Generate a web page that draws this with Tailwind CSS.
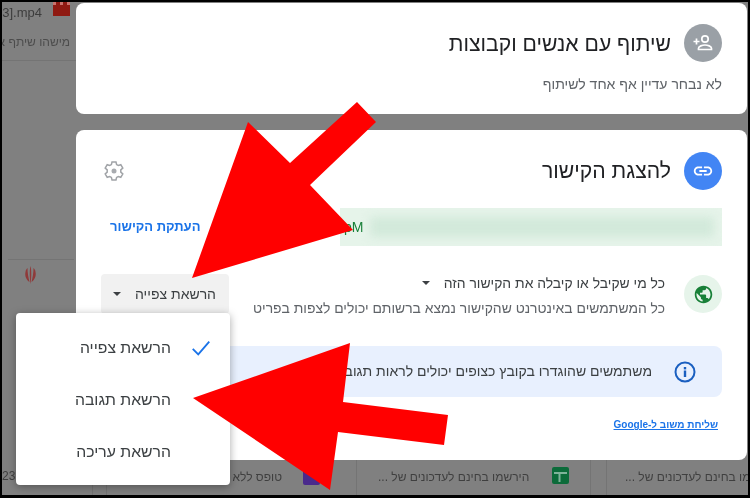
<!DOCTYPE html>
<html lang="he" dir="rtl">
<head>
<meta charset="utf-8">
<script src="https://cdn.jsdelivr.net/npm/@tailwindcss/browser@4"></script>
</head>
<body class="m-0 bg-black">
<div class="relative w-[750px] h-[498px] overflow-hidden bg-black font-['Liberation_Sans',sans-serif] p-[2px_2px_3px_2px]">
  <div class="relative w-full h-full bg-[#808080] overflow-hidden blur-[0.4px]">
    <!-- files behind the dialog -->
    <div class="absolute left-0 top-0 w-[74px] h-[59px] border-b border-[#747474] overflow-hidden" dir="ltr">
      <div class="flex items-start">
        <span class="text-[13px] text-[#3c3c3c] mt-[1px] ml-[0px] whitespace-nowrap w-[40px] text-right">3].mp4</span>
        <span class="ml-[11px] w-[17px] h-[14px] bg-[#8f1a12] border-t-[3px] border-dotted border-[#c9726c]"></span>
      </div>
      <div class="text-[12px] text-[#4c4c4c] mt-[10px] whitespace-nowrap w-[68px] overflow-hidden" dir="rtl">מישהו שיתף איתך</div>
    </div>
    <div class="absolute left-[6px] top-[257px] w-[66px] border-t border-[#747474] h-[40px]" dir="ltr">
      <svg class="ml-[16px] mt-[6px]" width="13" height="18" viewBox="0 0 12 18" fill="#8f3a3a"><path d="M6 0c1 3 1 12 0 18C5 12 5 3 6 0zM3 2c0 5 1 10 2 14C2 14 0 10 1 6c0-2 1-3 2-4zM9 2c1 1 2 2 2 4 1 4-1 8-4 10 1-4 2-9 2-14z"/></svg>
    </div>
    <span class="absolute left-0 top-[465px] w-[13px] overflow-hidden text-[12px] text-[#3f3f3f]" dir="ltr">23</span>
    <span class="absolute left-[90px] top-[483px] w-px h-[12px] bg-[#747474]"></span>
    <span class="absolute left-[104px] top-[483px] w-px h-[12px] bg-[#747474]"></span>
    <span class="absolute left-[230px] top-[466px] w-[50px] text-[12px] text-[#3f3f3f] whitespace-nowrap">טופס ללא שם</span>
    <span class="absolute left-[301px] top-[466px] w-[17px] h-[17px] bg-[#4a2a8c] rounded-[2px]"></span>
    <span class="absolute left-[354px] top-[458px] w-px h-[36px] bg-[#747474]"></span>
    <span class="absolute left-[376px] top-[466px] text-[12px] text-[#3f3f3f] whitespace-nowrap">הירשמו בחינם לעדכונים של ...</span>
    <span class="absolute left-[550px] top-[465px] w-[17px] h-[17px] bg-[#0c6b3a] rounded-[2px] flex items-center justify-center">
      <svg width="13" height="13" viewBox="0 0 13 13"><path d="M0 4h13M5.500 4v9" stroke="#7fb39a" stroke-width="2"/></svg>
    </span>
    <span class="absolute left-[588px] top-[458px] w-px h-[36px] bg-[#747474]"></span>
    <span class="absolute left-[604px] top-[458px] w-px h-[36px] bg-[#747474]"></span>
    <span class="absolute left-[623px] top-[466px] text-[12px] text-[#3f3f3f] whitespace-nowrap">הירשמו בחינם לעדכונים של ...</span>

    <!-- dialog -->
    <div class="absolute left-[74px] top-[1px] w-[671px] flex flex-col gap-[16px]">
      <section class="h-[111px] bg-white rounded-[8px] pr-[25px] pt-[21px]">
        <div class="flex items-center gap-[13px] h-[38px]">
          <span class="w-[38px] h-[38px] rounded-full bg-[#9aa0a6] flex items-center justify-center">
            <svg width="24" height="24" viewBox="0 0 24 24" fill="none" stroke="#fff" stroke-width="1.700"><circle cx="14" cy="8" r="3.200"/><path d="M7.500 18.500v-1.300c0-2 4-3.200 6.500-3.200s6.500 1.200 6.500 3.200v1.300z"/><path d="M2.500 10.500h6M5.500 7.500v6"/></svg>
          </span>
          <h2 class="text-[21.200px] mt-[2px] font-normal text-[#202124] whitespace-nowrap">שיתוף עם אנשים וקבוצות</h2>
        </div>
        <p class="mt-[13px] text-[14px] leading-[18px] text-[#5f6368]">לא נבחר עדיין אף אחד לשיתוף</p>
      </section>

      <section class="relative h-[330px] bg-white rounded-[8px] pr-[25px] pl-[25px] pt-[22px]">
        <div class="flex items-center gap-[13px] h-[38px]">
          <span class="w-[38px] h-[38px] rounded-full bg-[#4285f4] flex items-center justify-center">
            <svg width="22" height="22" viewBox="0 0 24 24" fill="#fff"><path d="M3.900 12c0-1.710 1.390-3.100 3.100-3.100h4V7H7c-2.760 0-5 2.240-5 5s2.240 5 5 5h4v-1.900H7c-1.710 0-3.100-1.390-3.100-3.100zM8 13h8v-2H8v2zm9-6h-4v1.900h4c1.710 0 3.100 1.390 3.100 3.100s-1.390 3.100-3.100 3.100h-4V17h4c2.760 0 5-2.240 5-5s-2.240-5-5-5z"/></svg>
          </span>
          <h2 class="text-[21.200px] font-normal text-[#202124] whitespace-nowrap">להצגת הקישור</h2>
          <svg class="mr-auto ml-[1px]" width="24" height="24" viewBox="0 0 24 24" fill="none" stroke="#a0a3a7" stroke-width="1.500"><path d="M10 3h4l.6 2.600 1.700.9 2.500-.8 2 3.400-2 1.800v2.200l2 1.800-2 3.400-2.500-.8-1.700.9L14 21h-4l-.6-2.600-1.700-.9-2.500.8-2-3.400 2-1.800v-2.200l-2-1.800 2-3.400 2.500.8 1.700-.9z"/><circle cx="12" cy="12" r="2.500" fill="#a8abaf" stroke="none"/></svg>
        </div>

        <div class="mt-[18px] flex items-center justify-between h-[38px]">
          <div class="relative w-[382px] h-full bg-[#e6f4ea] overflow-hidden flex items-center" dir="ltr">
            <span class="text-[14px] text-[#188038] pl-[4px]">pM</span>
            <span class="absolute left-[30px] right-[8px] top-[9px] bottom-[9px] bg-[#d2e9da] blur-[5px]"></span>
          </div>
          <a class="text-[13px] font-bold text-[#1a73e8] whitespace-nowrap ml-[9px]">העתקת הקישור</a>
        </div>

        <div class="mt-[28px] flex items-start h-[44px] gap-[19px]">
          <span class="mt-[1px] w-[38px] h-[38px] rounded-full bg-[#e6f4ea] flex items-center justify-center shrink-0">
            <svg width="21" height="21" viewBox="0 0 24 24" fill="#188038"><path d="M12 2C6.480 2 2 6.480 2 12s4.480 10 10 10 10-4.480 10-10S17.520 2 12 2zm-1 17.930c-3.950-.49-7-3.850-7-7.930 0-.62.080-1.210.210-1.790L9 15v1c0 1.100.9 2 2 2v1.930zm6.900-2.540c-.26-.81-1-1.390-1.900-1.390h-1v-3c0-.55-.45-1-1-1H8v-2h2c.55 0 1-.45 1-1V7h2c1.100 0 2-.9 2-2v-.41c2.930 1.190 5 4.060 5 7.410 0 2.080-.8 3.970-2.100 5.390z"/></svg>
          </span>
          <div class="flex-1 text-[13.900px] leading-[18px] whitespace-nowrap -mt-[1px]">
            <div class="flex items-center gap-[14px] h-[20px] text-[#3c4043]">
              <span>כל מי שקיבל או קיבלה את הקישור הזה</span>
              <span class="w-0 h-0 border-x-[4px] border-x-transparent border-t-[4px] border-t-[#3c4043]"></span>
            </div>
            <div class="mt-[6px] text-[#5f6368]">כל המשתמשים באינטרנט שהקישור נמצא ברשותם יכולים לצפות בפריט</div>
          </div>
          <div class="w-[128px] h-[40px] shrink-0 bg-[#f1f1f1] rounded-[4px] flex items-center gap-[14px] pr-[13px] text-[14px] text-[#3c4043] whitespace-nowrap">
            <span>הרשאת צפייה</span>
            <span class="w-0 h-0 border-x-[4px] border-x-transparent border-t-[4px] border-t-[#3c4043]"></span>
          </div>
        </div>

        <div class="mt-[28px] h-[51px] w-[620px] bg-[#e8f0fe] rounded-[8px] flex items-center gap-[21px] pr-[25px]">
          <svg class="shrink-0" width="24" height="24" viewBox="0 0 24 24" fill="none"><circle cx="12" cy="12" r="9.500" stroke="#1a5fc0" stroke-width="2"/><rect x="10.800" y="10.500" width="2.400" height="6.500" fill="#1a5fc0"/><rect x="10.800" y="7" width="2.400" height="2.400" fill="#1a5fc0"/></svg>
          <span class="text-[14px] text-[#3c4043] whitespace-nowrap">משתמשים שהוגדרו בקובץ כצופים יכולים לראות תגובות</span>
        </div>

        <a class="block mt-[20px] text-[10px] font-bold leading-[16px] text-[#1a73e8] underline mr-[4px]">שליחת משוב ל-Google</a>
      </section>
    </div>

    <!-- dropdown menu -->
    <ul class="absolute left-[14px] top-[311px] w-[214px] h-[172px] bg-white rounded-[4px] shadow-[0_2px_8px_rgba(0,0,0,0.35)] flex flex-col pt-[9px] text-[15.750px] text-[#3c4043]">
      <li class="h-[52px] flex items-center gap-[19px] pr-[18px]">
        <svg width="22" height="22" viewBox="0 0 24 24" fill="none" stroke="#1a73e8" stroke-width="2"><path d="M3 13l6 6L21 5"/></svg>
        <span>הרשאת צפייה</span>
      </li>
      <li class="h-[52px] flex items-center pr-[59px]">הרשאת תגובה</li>
      <li class="h-[51px] flex items-center pr-[59px]">הרשאת עריכה</li>
    </ul>
  </div>

  <!-- red annotation arrows -->
  <svg class="absolute left-0 top-0" width="750" height="498" viewBox="0 0 750 498" fill="#ff0000">
    <polygon points="357,102 376,122 310,185 353,230 192,278 248,122 290,163"/>
    <polygon points="193,398 350,343 343,402 448,415 444,445 338,432 330,490"/>
  </svg>
</div>
</body>
</html>
